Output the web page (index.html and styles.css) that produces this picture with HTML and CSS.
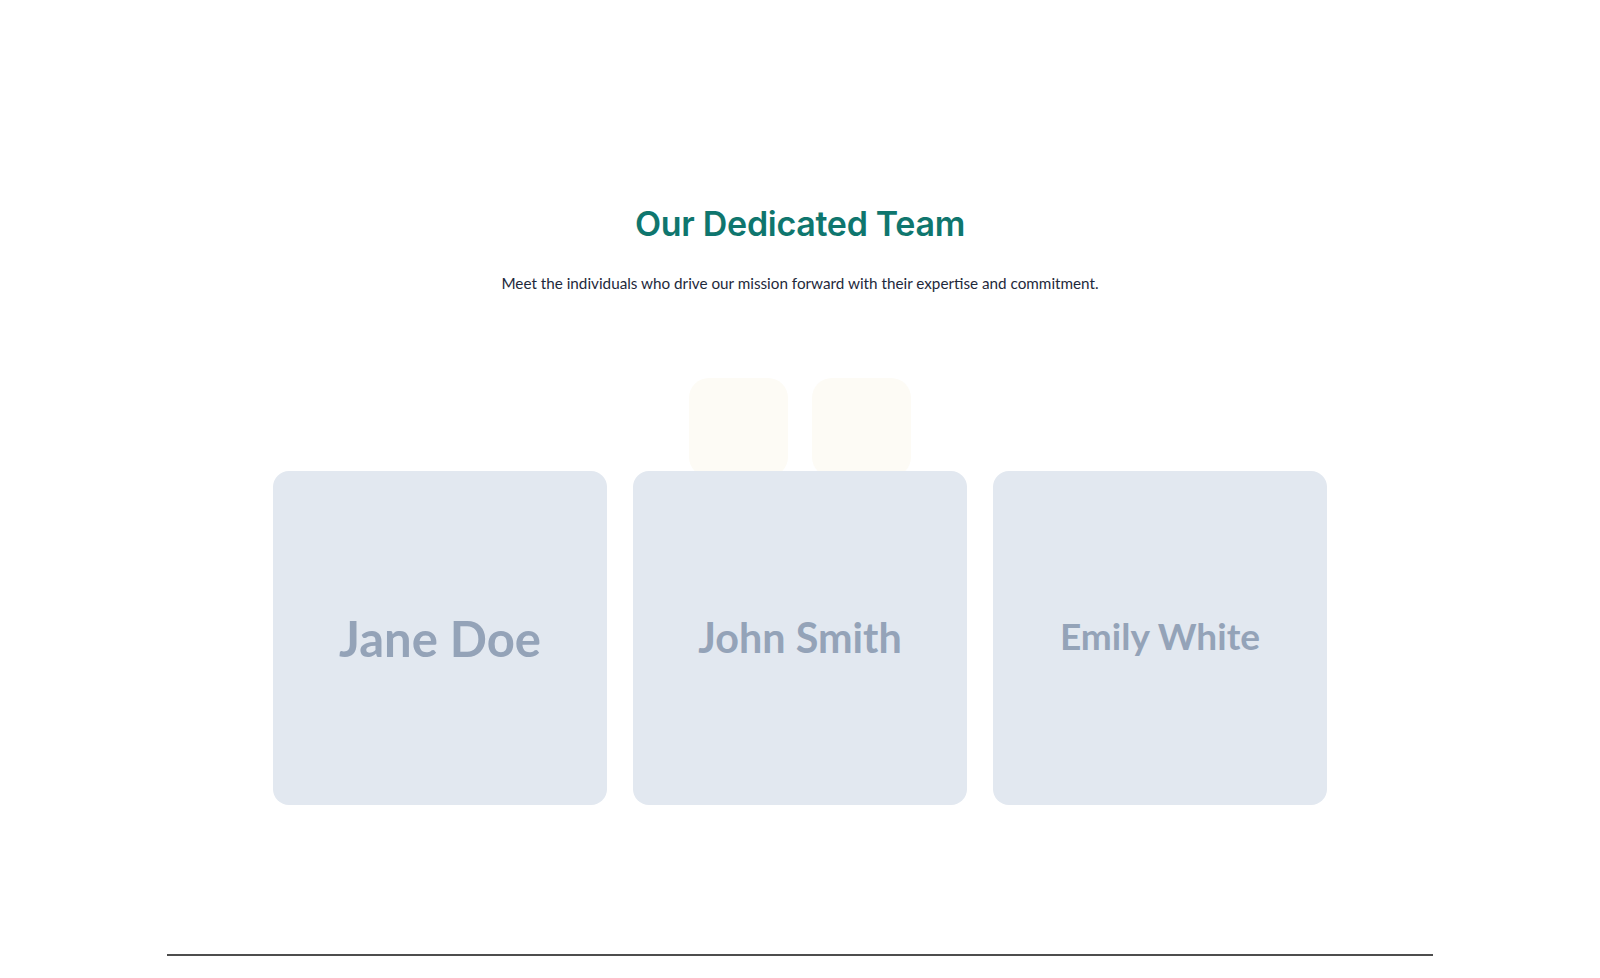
FILE: index.html
```html
<!DOCTYPE html>
<html lang="en">
<head>
<meta charset="utf-8">
<title>Our Dedicated Team</title>
<link rel="stylesheet" href="styles.css">
</head>
<body>
<main class="team">
  <h2 class="team-title">Our Dedicated Team</h2>
  <p class="team-sub">Meet the individuals who drive our mission forward with their expertise and commitment.</p>
  <div class="deco">
    <span class="deco-box"></span>
    <span class="deco-box"></span>
  </div>
  <div class="cards">
    <div class="card"><span class="name name-lg">Jane Doe</span></div>
    <div class="card"><span class="name name-md">John Smith</span></div>
    <div class="card"><span class="name name-sm">Emily White</span></div>
  </div>
</main>
<footer class="footer"></footer>
</body>
</html>
```
FILE: styles.css
```css
html, body {
  margin: 0;
  padding: 0;
  background: #ffffff;
}
body {
  font-family: "Lato", "Inter", sans-serif;
  color: #1e293b;
}
.team {
  display: flex;
  flex-direction: column;
  align-items: center;
  padding-top: 202px;
}
.team-title {
  margin: 0;
  font-family: "Inter", sans-serif;
  font-weight: 600;
  font-size: 34px;
  line-height: 43px;
  letter-spacing: -0.3px;
  color: #0f766e;
}
.team-sub {
  margin: 26px 0 0;
  font-family: "Lato", sans-serif;
  font-size: 15.25px;
  line-height: 24px;
  color: #1e293b;
}
.deco {
  display: flex;
  gap: 24px;
  margin-top: 83px;
}
.deco-box {
  width: 99px;
  height: 99px;
  border-radius: 20px;
  background: #fdfbf5;
}
.cards {
  position: relative;
  z-index: 1;
  margin-top: -6px;
  width: 1054px;
  display: grid;
  grid-template-columns: repeat(3, 1fr);
  gap: 26px;
}
.card {
  aspect-ratio: 1 / 1;
  background: #e2e8f0;
  border-radius: 16px;
  display: flex;
  align-items: center;
  justify-content: center;
}
.name {
  font-family: "Lato", sans-serif;
  font-weight: 700;
  color: #94a3b8;
  line-height: 1;
}
.name-lg { font-size: 49px; }
.name-md { font-size: 41.3px; }
.name-sm { font-size: 37px; margin-bottom: 6px; }
.footer {
  width: 1266px;
  margin: 149px auto 0;
  border-top: 2px solid #4d4d4d;
  height: 22px;
}
```
